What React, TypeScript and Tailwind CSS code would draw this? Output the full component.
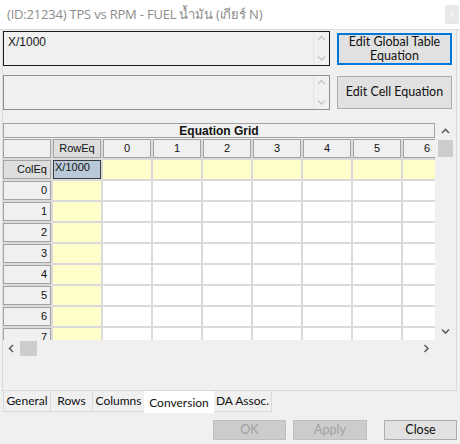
import React from "react";

const cols = ["0", "1", "2", "3", "4", "5", "6"];
const rows = ["0", "1", "2", "3", "4", "5", "6", "7"];

function Chev(props: { dir: "up" | "down" | "left" | "right"; color: string; w?: number }) {
  const d = {
    up: "M1 5 L4.5 1.5 L8 5",
    down: "M1 1.5 L4.5 5 L8 1.5",
    left: "M5 1 L1.5 4.5 L5 8",
    right: "M1.5 1 L5 4.5 L1.5 8",
  }[props.dir];
  const horiz = props.dir === "up" || props.dir === "down";
  return (
    <svg width={horiz ? 9 : 7} height={horiz ? 7 : 9} viewBox={horiz ? "0 0 9 7" : "0 0 7 9"}>
      <path d={d} fill="none" stroke={props.color} strokeWidth={props.w ?? 1.6} />
    </svg>
  );
}

function TextBox(props: { text?: string; focused?: boolean }) {
  return (
    <div
      className={`flex h-[35px] w-[327px] bg-[#f0f0f0] border ${props.focused ? "border-[#1a1a1a]" : "border-[#8f8f8f]"}`}
    >
      <div className="flex-1 pl-[4px] pt-[3px] text-[12px] leading-[14px] text-[#1a1a1a] font-['Liberation_Sans',sans-serif]">
        {props.text}
      </div>
      <div className="flex w-[16px] flex-col items-center justify-between border-l border-[#e3e3e3] py-[3px]">
        <Chev dir="up" color="#c4c4c4" w={1.3} />
        <Chev dir="down" color="#c4c4c4" w={1.3} />
      </div>
    </div>
  );
}

function HeadCell(props: { children?: React.ReactNode; dark?: boolean; right?: boolean }) {
  return (
    <div
      className={`flex h-[19px] items-center border border-[#a3a3a3] text-[11px] text-[#111] ${props.dark ? "bg-[#dedede]" : "bg-[#f0f0f0]"} ${props.right ? "justify-end pr-[3px]" : "justify-center"}`}
    >
      {props.children}
    </div>
  );
}

export default function App() {
  return (
    <div className="flex h-[444px] w-[460px] flex-col overflow-hidden bg-[#f0f0f0] font-['Liberation_Sans',sans-serif]">
      {/* title bar */}
      <div className="flex h-[30px] items-center justify-between border-b border-[#dcdcdc] bg-white pl-[7px] pr-[1px]">
        <span className="text-[13px] text-[#8c8c8c] font-['Open_Sans','Noto_Sans',sans-serif] tracking-[-0.2px]">
          (ID:21234) TPS vs RPM - FUEL น้ำมัน (เกียร์ N)
        </span>
        <div className="flex h-[19px] w-[14px] items-center justify-center bg-[#e8e8e8] text-[9px] text-white">x</div>
      </div>

      <div className="pl-[2px]">
        <div className="flex h-[361px] w-[455px] flex-col border border-[#dadada] border-t-0 pt-[1px]">
          <div className="flex">
            <TextBox text="X/1000" focused />
            <button className="ml-[7px] mt-[2px] flex h-[32px] w-[115px] flex-col items-center justify-center border-2 border-[#0078d7] bg-[#e1e1e1] text-[12.5px] leading-[14px] text-[#111] font-['Lato',sans-serif]">
              <span>Edit Global Table</span>
              <span>Equation</span>
            </button>
          </div>
          <div className="mt-[9px] flex">
            <TextBox />
            <button className="ml-[7px] mt-[1px] h-[33px] w-[115px] border border-[#adadad] bg-[#e1e1e1] text-[12.5px] text-[#111] font-['Lato',sans-serif]">
              Edit Cell Equation
            </button>
          </div>

          {/* grid */}
          <div className="mt-[13px] flex h-[234px] w-[450px]">
            <div className="flex w-[432px] flex-col">
              <div className="flex h-[15px] items-center justify-center border border-[#a3a3a3] bg-[#f0f0f0] text-[12px] font-bold leading-none text-[#111]">
                Equation Grid
              </div>
              <div className="mt-[1px] h-[201px] overflow-hidden bg-[#dadada]">
                <div className="grid grid-cols-[repeat(9,48px)] auto-rows-[19px] gap-[2px]">
                  <HeadCell />
                  <HeadCell dark>RowEq</HeadCell>
                  {cols.map((c) => (
                    <HeadCell key={c}>{c}</HeadCell>
                  ))}
                  <HeadCell dark right>
                    ColEq
                  </HeadCell>
                  <div className="border border-[#3c3c3c] bg-[#b9c9d9] pl-[1px] text-[11px] leading-[12px] text-[#111]">
                    X/1000
                  </div>
                  {cols.map((c) => (
                    <div key={c} className="bg-[#ffffcc]" />
                  ))}
                  {rows.map((r) => (
                    <React.Fragment key={r}>
                      <HeadCell right>{r}</HeadCell>
                      <div className="bg-[#ffffcc]" />
                      {cols.map((c) => (
                        <div key={c} className="bg-white" />
                      ))}
                    </React.Fragment>
                  ))}
                </div>
              </div>
              <div className="flex h-[17px] items-center bg-[#f0f0f0]">
                <div className="flex w-[17px] justify-center">
                  <Chev dir="left" color="#606060" />
                </div>
                <div className="h-[15px] w-[17px] bg-[#cdcdcd]" />
                <div className="flex-1" />
                <div className="flex w-[17px] justify-center">
                  <Chev dir="right" color="#606060" />
                </div>
              </div>
            </div>
            <div className="flex w-[18px] flex-col items-center pl-[2px]">
              <div className="flex h-[17px] items-center justify-center">
                <Chev dir="up" color="#606060" />
              </div>
              <div className="h-[17px] w-[15px] bg-[#cdcdcd]" />
              <div className="flex-1" />
              <div className="flex h-[17px] items-center justify-center pb-[1px]">
                <Chev dir="down" color="#606060" />
              </div>
              <div className="h-[17px]" />
            </div>
          </div>
        </div>

        {/* tabs */}
        <div className="flex pl-[1px] text-[12px] text-[#111] font-['Lato',sans-serif]">
          <div className="flex h-[21px] w-[47px] items-center justify-center border-l border-b border-[#dadada]">General</div>
          <div className="flex h-[21px] w-[42px] items-center justify-center border-l border-b border-[#dadada]">Rows</div>
          <div className="flex h-[21px] w-[52px] items-center justify-center border-l border-b border-[#dadada]">Columns</div>
          <div className="flex h-[22px] w-[70px] items-center justify-center bg-white pt-[2px]">Conversion</div>
          <div className="flex h-[21px] w-[58px] items-center justify-center border-r border-b border-[#dadada] whitespace-nowrap">
            DA Assoc.
          </div>
        </div>

        <div className="mt-[7px] flex text-[12.5px] font-['Lato',sans-serif]">
          <button className="ml-[211px] h-[20px] w-[73px] border border-[#bfbfbf] bg-[#cccccc] text-[#a0a0a0]">OK</button>
          <button className="ml-[7px] h-[20px] w-[74px] border border-[#bfbfbf] bg-[#cccccc] text-[#a0a0a0]">Apply</button>
          <button className="ml-[17px] h-[20px] w-[73px] border border-[#adadad] bg-[#e1e1e1] text-[#111]">Close</button>
        </div>
      </div>
    </div>
  );
}
